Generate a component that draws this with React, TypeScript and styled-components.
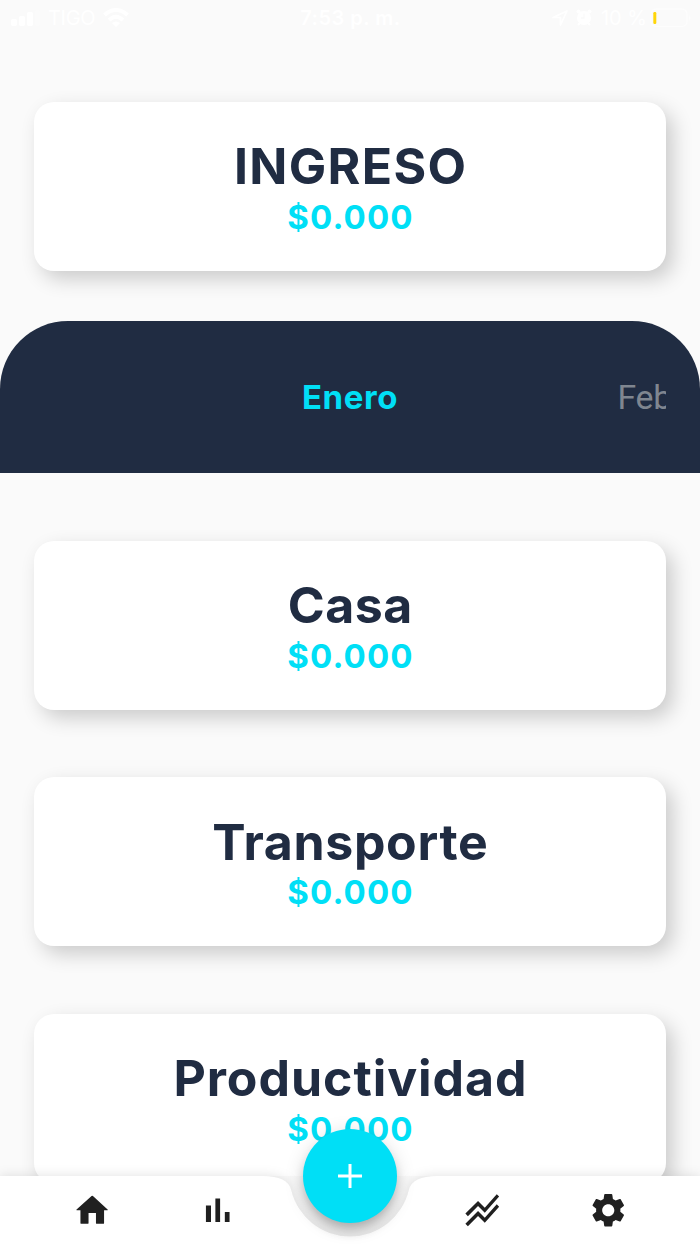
import React from 'react';
import styled, { createGlobalStyle } from 'styled-components';

const NAVY = '#202c42';
const CYAN = '#00dff6';

const GlobalStyle = createGlobalStyle`
  * { box-sizing: border-box; }
  body {
    margin: 0;
    background: #fafafa;
    font-family: Inter, 'Liberation Sans', sans-serif;
  }
`;

const Screen = styled.div`
  position: relative;
  width: 700px;
  height: 1244px;
  overflow: hidden;
  display: flex;
  flex-direction: column;
  background: #fafafa;
`;

const StatusBar = styled.header`
  flex: none;
  height: 35px;
  padding: 0 10px 0 11px;
  display: grid;
  grid-template-columns: 1fr auto 1fr;
  align-items: center;
  color: #fff;
  font-size: 20px;
`;

const StatusGroup = styled.div<{ $end?: boolean }>`
  display: flex;
  align-items: center;
  justify-content: ${(p) => (p.$end ? 'flex-end' : 'flex-start')};
  gap: 8px;
  margin-right: ${(p) => (p.$end ? -2 : 0)}px;
`;

const Carrier = styled.span`
  letter-spacing: -0.3px;
`;

const Charge = styled.span`
  margin-left: 1px;
  margin-right: -5px;
`;

const Clock = styled.span`
  font-weight: 600;
  letter-spacing: 0.5px;
`;

const Body = styled.main`
  flex: none;
  height: 1141px;
  padding-top: 66.6px;
  overflow: hidden;
`;

const Card = styled.section`
  height: 169px;
  margin: 0 34px 67.6px;
  padding-top: 34.5px;
  border-radius: 20px;
  background: #fff;
  box-shadow: 7px 8px 20px rgba(0, 0, 0, 0.19);
  text-align: center;
`;

const IncomeCard = styled(Card)`
  margin-bottom: 50.5px;
`;

const Title = styled.h1<{ $tracking: number }>`
  margin: 0;
  padding-left: ${(p) => p.$tracking}px;
  font-size: 50px;
  line-height: 61px;
  font-weight: 680;
  letter-spacing: ${(p) => p.$tracking}px;
  color: ${NAVY};
`;

const Amount = styled.p`
  margin: -0.6px 0 0;
  padding-left: 1px;
  font-size: 33px;
  line-height: 40px;
  font-weight: 660;
  letter-spacing: 1.1px;
  color: ${CYAN};
`;

const MonthBar = styled.nav`
  height: 152.1px;
  margin-bottom: 67.6px;
  padding: 0 34px;
  border-radius: 68px 68px 0 0;
  background: ${NAVY};
`;

const MonthTrack = styled.div`
  height: 100%;
  display: grid;
  grid-template-columns: 1fr auto 1fr;
  align-items: center;
  overflow: hidden;
  font-size: 33px;
  line-height: 40px;
`;

const CurrentMonth = styled.span`
  grid-column: 2;
  font-weight: 700;
  letter-spacing: 0.6px;
  color: ${CYAN};
`;

const NextMonth = styled.span`
  width: 48.5px;
  padding-top: 2px;
  justify-self: end;
  font-family: Roboto, Inter, sans-serif;
  font-size: 33.8px;
  font-weight: 400;
  letter-spacing: -0.3px;
  white-space: nowrap;
  color: #7f8690;
`;

const BottomBar = styled.footer`
  position: relative;
  flex: none;
  height: 68px;
`;

const BarShadow = styled.div`
  position: absolute;
  inset: 0;
  filter: drop-shadow(0 0 6px rgba(0, 0, 0, 0.12));
`;

const BarSurface = styled.div`
  height: 100%;
  background: #fff;
  clip-path: path('M0 0H262.45Q287.8 0 291.16 14.07A60.5 60.5 0 0 0 408.84 14.07Q412.2 0 437.55 0H700V68H0Z');
`;

const NavItems = styled.div`
  position: relative;
  height: 100%;
  padding: 0 29px;
  display: grid;
  grid-template-columns: 126px 126px 1fr 126px 126px;
  place-items: center;
`;

const NavButton = styled.button<{ $column: number }>`
  grid-column: ${(p) => p.$column};
  border: 0;
  padding: 0;
  background: none;
  color: #202020;
  svg { display: block; }
`;

const AddButton = styled.button`
  position: absolute;
  left: 302.7px;
  top: -47.2px;
  width: 94.6px;
  height: 94.6px;
  border: 0;
  padding: 0;
  border-radius: 50%;
  display: grid;
  place-items: center;
  background: ${CYAN};
  box-shadow: 0 9px 12px -2px rgba(0, 0, 0, 0.24), 0 4px 20px rgba(0, 0, 0, 0.14);
`;

const Icon = ({ d, size = 40.5 }: { d: string; size?: number }) => (
  <svg width={size} height={size} viewBox="0 0 24 24" fill="currentColor">
    <path d={d} />
  </svg>
);

const navIcons = [
  { label: 'Inicio', column: 1, d: 'M9.8 19.5v-5.8h4.4v5.8q0 .5.5.5h3.8q.5 0 .5-.5V12h2q.5 0 .1-.4L12.4 3.5q-.4-.3-.8 0L2.7 11.6q-.3.4.1.4H5v7.5q0 .5.5.5h3.8q.5 0 .5-.5z' },
  { label: 'Reportes', column: 2, d: 'M4.7 9.2h3V19h-3V9.2zM10.3 5h2.8v14h-2.8V5zm5.6 8h2.8v6h-2.8v-6z' },
  { label: 'Tendencias', column: 4, d: 'M2 19.99l7.5-7.51 4 4 7.09-7.97L22 9.92l-8.5 9.56-4-4-6 6.01-1.5-1.5zm1.5-4.5l6-6.01 4 4L22 3.92l-1.41-1.41-7.09 7.97-4-4L2 13.99l1.5 1.5z' },
  { label: 'Ajustes', column: 5, d: 'M19.14 12.94c.04-.3.06-.61.06-.94 0-.32-.02-.64-.07-.94l2.03-1.58c.18-.14.23-.41.12-.61l-1.92-3.32c-.12-.22-.37-.29-.59-.22l-2.39.96c-.5-.38-1.03-.7-1.62-.94l-.36-2.54c-.04-.24-.24-.41-.48-.41h-3.84c-.24 0-.43.17-.47.41l-.36 2.54c-.59.24-1.13.57-1.62.94l-2.39-.96c-.22-.08-.47 0-.59.22L2.74 8.87c-.12.21-.08.47.12.61l2.03 1.58c-.05.3-.09.63-.09.94s.02.64.07.94l-2.03 1.58c-.18.14-.23.41-.12.61l1.92 3.32c.12.22.37.29.59.22l2.39-.96c.5.38 1.03.7 1.62.94l.36 2.54c.05.24.24.41.48.41h3.84c.24 0 .44-.17.47-.41l.36-2.54c.59-.24 1.13-.56 1.62-.94l2.39.96c.22.08.47 0 .59-.22l1.92-3.32c.12-.22.07-.47-.12-.61l-2.01-1.58zM12 15.6c-1.98 0-3.6-1.62-3.6-3.6s1.62-3.6 3.6-3.6 3.6 1.62 3.6 3.6-1.62 3.6-3.6 3.6z' },
];

const categories = [
  { name: 'Casa', amount: '$0.000', tracking: 0.5 },
  { name: 'Transporte', amount: '$0.000', tracking: 0.65 },
  { name: 'Productividad', amount: '$0.000', tracking: 0.95 },
];

export default function App() {
  return (
    <Screen>
      <GlobalStyle />
      <StatusBar>
        <StatusGroup>
          <svg width="29" height="16" viewBox="0 0 29 16" fill="#fff">
            <rect x="0" y="9" width="6" height="7" rx="2" />
            <rect x="8" y="6" width="6" height="10" rx="2" />
            <rect x="16" y="2" width="6" height="14" rx="2" />
            <rect x="24" y="0" width="5" height="16" rx="2" opacity="0.25" />
          </svg>
          <Carrier>TIGO</Carrier>
          <svg width="26" height="19" viewBox="0 0 26 19" fill="none" stroke="#fff" strokeWidth="4">
            <path d="M1.5 7Q13-3 24.5 7M6 12Q13 5.500 20 12" />
            <path d="M9 15Q13 12 17 15L13 19Z" fill="#fff" stroke="none" />
          </svg>
        </StatusGroup>
        <Clock>7:53 p. m.</Clock>
        <StatusGroup $end>
          <svg width="16" height="16" viewBox="0 0 16 16" fill="none" stroke="#fff" strokeWidth="1.7" strokeLinejoin="round">
            <path d="M1 7.500L15 1L8.500 15V7.500Z" />
          </svg>
          <svg width="16" height="17" viewBox="0 0 16 17" fill="#fff">
            <circle cx="8" cy="9" r="7" />
            <circle cx="2.500" cy="2.500" r="2" />
            <circle cx="13.500" cy="2.500" r="2" />
            <path d="M2 16l3-3M14 16l-3-3" stroke="#fff" strokeWidth="2" />
            <path d="M8 4.500V9H5" fill="none" stroke="#fafafa" strokeWidth="1.300" />
          </svg>
          <Charge>10 %</Charge>
          <svg width="42" height="20" viewBox="0 0 42 20" fill="none">
            <rect x="1" y="1" width="36" height="17.500" rx="5" stroke="#fff" strokeWidth="1.500" opacity="0.5" />
            <path d="M39 7Q42 10 39 13Z" fill="#fff" opacity="0.5" />
            <rect x="3.300" y="4" width="3" height="12" rx="1.200" fill="#ffd60a" />
          </svg>
        </StatusGroup>
      </StatusBar>

      <Body>
        <IncomeCard>
          <Title $tracking={1.3}>INGRESO</Title>
          <Amount>$0.000</Amount>
        </IncomeCard>
        <MonthBar>
          <MonthTrack>
            <CurrentMonth>Enero</CurrentMonth>
            <NextMonth>Febrero</NextMonth>
          </MonthTrack>
        </MonthBar>
        {categories.map((c) => (
          <Card key={c.name}>
            <Title as="h2" $tracking={c.tracking}>{c.name}</Title>
            <Amount>{c.amount}</Amount>
          </Card>
        ))}
      </Body>

      <BottomBar>
        <BarShadow>
          <BarSurface />
        </BarShadow>
        <NavItems>
          {navIcons.map((n) => (
            <NavButton key={n.label} $column={n.column} aria-label={n.label}>
              <Icon d={n.d} />
            </NavButton>
          ))}
        </NavItems>
        <AddButton aria-label="Agregar">
          <svg width="24" height="24" viewBox="0 0 24 24" stroke="#fff" strokeWidth="3">
            <path d="M12 0V24M0 12H24" />
          </svg>
        </AddButton>
      </BottomBar>
    </Screen>
  );
}
